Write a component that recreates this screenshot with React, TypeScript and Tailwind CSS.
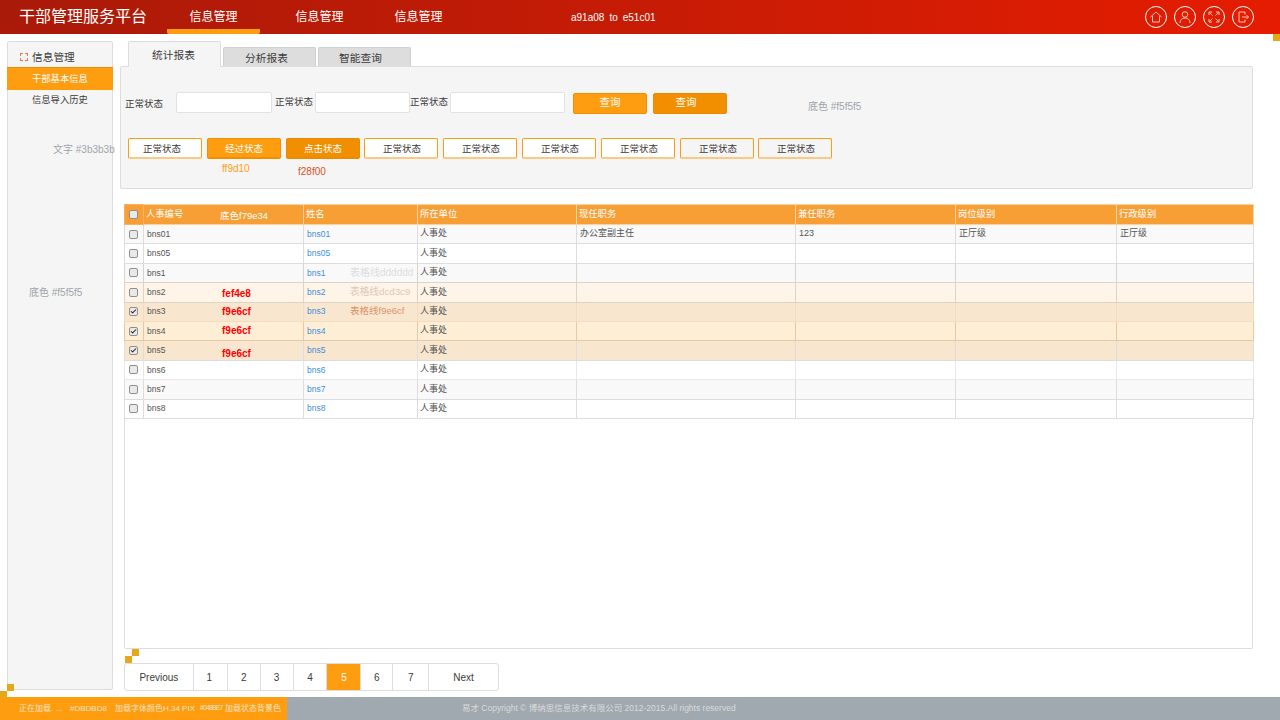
import { Check } from "lucide-react";

const cjk = "font-['Liberation_Sans','Noto_Sans_CJK_SC',sans-serif]";

const navItems = [
  { label: "信息管理", className: "w-[93px] ml-[19px]", active: true },
  { label: "信息管理", className: "w-[93px] ml-[13px]", active: false },
  { label: "信息管理", className: "w-[93px] ml-[6px]", active: false },
];

const normal = "bg-white border-[#ff9d10] border-b-[#fcc882] text-[#3b3b3b] pl-[2px]";
const toolButtons = [
  { label: "正常状态", className: "bg-white border-[#ff9d10] border-b-[#fcc882] text-[#3b3b3b] pr-[6px] mr-[5px]" },
  { label: "经过状态", className: "bg-[#ff9d10] border-[#f28f00] text-white mr-[5px]" },
  { label: "点击状态", className: "bg-[#f28f00] border-[#ec8a00] text-white mr-[4px]" },
  { label: "正常状态", className: `${normal} mr-[5px]` },
  { label: "正常状态", className: `${normal} mr-[5px]` },
  { label: "正常状态", className: `${normal} mr-[5px]` },
  { label: "正常状态", className: `${normal} mr-[5px]` },
  { label: "正常状态", className: "bg-[#f5f5f5] border-[#ff9d10] border-b-[#fcc882] text-[#3b3b3b] pl-[2px] mr-[4px]" },
  { label: "正常状态", className: "bg-[#f5f5f5] border-[#ff9d10] border-b-[#fcc882] text-[#3b3b3b] pl-[2px]" },
];

const columns = ["人事编号", "姓名", "所在单位", "现任职务", "兼任职务", "岗位级别", "行政级别"];

const rows = [
  { id: "bns01", bg: "bg-[#f9f9f9]", line: "border-[#dddddd]", checked: false, extra: ["办公室副主任", "123", "正厅级", "正厅级"] },
  { id: "bns05", bg: "bg-white", line: "border-[#dddddd]", checked: false },
  { id: "bns1", bg: "bg-[#f9f9f9]", line: "border-[#dcd3c9]", checked: false, note: "表格线dddddd", noteClass: "top-[1px] text-[10px] text-[#dddddd]" },
  { id: "bns2", bg: "bg-[#fef4e8]", line: "border-[#dcd3c9]", checked: false, tag: "fef4e8", tagTop: "top-[3px]", note: "表格线dcd3c9", noteClass: "top-[2px] text-[9.700px] text-[#dcc9b8]" },
  { id: "bns3", bg: "bg-[#f9e6cf]", line: "border-[#f3dcc0]", checked: true, tag: "f9e6cf", tagTop: "top-[1px]", note: "表格线f9e6cf", noteClass: "top-[1px] text-[9.500px] text-[#d9946a]" },
  { id: "bns4", bg: "bg-[#feeed6]", line: "border-[#e5c9a5]", checked: true, tag: "f9e6cf", tagTop: "top-[1px]" },
  { id: "bns5", bg: "bg-[#f9e6cf]", line: "border-[#dddddd]", checked: true, tag: "f9e6cf", tagTop: "top-[5px]" },
  { id: "bns6", bg: "bg-white", line: "border-[#e8e8e8]", checked: false },
  { id: "bns7", bg: "bg-[#f9f9f9]", line: "border-[#dddddd]", checked: false },
  { id: "bns8", bg: "bg-white", line: "border-[#dddddd]", checked: false },
];

const pages = [
  { label: "Previous", className: "w-[69px]" },
  { label: "1", className: "w-[34px] pr-[2px]" },
  { label: "2", className: "w-[33px]" },
  { label: "3", className: "w-[33px]" },
  { label: "4", className: "w-[34px]" },
  { label: "5", className: "w-[34px] bg-[#ff9d10] text-white" },
  { label: "6", className: "w-[32px]" },
  { label: "7", className: "w-[36px]" },
  { label: "Next", className: "w-[69px] border-r-0" },
];

function HeaderIcon({ children }: { children: React.ReactNode }) {
  return (
    <div className="flex h-[22px] w-[22px] items-center justify-center rounded-full border border-white">
      <svg width="14" height="14" viewBox="0 0 14 14" fill="none" stroke="#ffd5c8" strokeWidth="0.9">
        {children}
      </svg>
    </div>
  );
}

function Box({ checked }: { checked: boolean }) {
  return (
    <span className="flex h-[9px] w-[9px] items-center justify-center rounded-[2px] border border-[#8f8f8f] bg-[#e9e9e9]">
      {checked && <Check size={9} strokeWidth={3.5} className="text-[#222]" />}
    </span>
  );
}

function Corner({ className }: { className: string }) {
  return <span className={`absolute h-[7px] w-[7px] bg-[#e5a917] ${className}`} />;
}

export default function App() {
  return (
    <div className={`relative flex h-[720px] w-[1280px] flex-col overflow-hidden bg-white ${cjk}`}>
      <header className="flex h-[34px] shrink-0 items-stretch bg-gradient-to-r from-[#a91a08] to-[#e51c01] text-white">
        <div className="ml-[19px] w-[129px] pt-[6px] text-[16px] leading-[22px]">干部管理服务平台</div>
        {navItems.map((item, i) => (
          <div
            key={i}
            className={`${item.className} flex items-center justify-center border-b-[5px] pt-[5px] text-[12px] ${
              item.active ? "rounded-b-[2px] border-[#ff9d10]" : "border-transparent"
            }`}
          >
            {item.label}
          </div>
        ))}
        <div className="ml-[106px] flex items-center gap-[5px] text-[10px]">
          <span>a91a08</span>
          <span>to</span>
          <span>e51c01</span>
        </div>
        <div className="ml-auto mr-[26px] flex items-center gap-[7px]">
          <HeaderIcon>
            <path d="M1.500 7 7 2l5.500 5M3.500 6v6h7V6" />
          </HeaderIcon>
          <HeaderIcon>
            <circle cx="7" cy="4.500" r="2.800" />
            <path d="M2 13c0-3.200 2-5 5-5s5 1.800 5 5" />
          </HeaderIcon>
          <HeaderIcon>
            <path d="M2.500 2.500l3 3M11.500 2.500l-3 3M2.500 11.500l3-3M11.500 11.500l-3-3M2 5V2h3M9 2h3v3M2 9v3h3M12 9v3H9" />
          </HeaderIcon>
          <HeaderIcon>
            <path d="M9 4.500V2H3v10h6V9.500M6 7h6.500M10.500 5l2 2-2 2" />
          </HeaderIcon>
        </div>
      </header>
      <Corner className="right-0 top-[34px]" />

      <main className="flex min-h-0 flex-1">
        <aside className="relative ml-[7px] mt-[7px] mb-[7px] w-[106px] shrink-0 rounded-[2px] border border-[#dddddd] bg-[#f5f5f5] text-[#3b3b3b]">
          <div className="flex h-[25px] items-center pl-[12px] pt-[5px] text-[10.700px]">
            <span className="mr-[4px] h-[8px] w-[8px] border border-dashed border-[#ee7a4a]" />
            信息管理
          </div>
          <div className="-mx-px flex h-[23px] items-center border-t border-[#f28f00] bg-[#ff9d10] pl-[25px] pt-[2px] text-[9.300px] text-white">
            干部基本信息
          </div>
          <div className="flex h-[21px] items-center pl-[24px] pt-[1px] text-[9.300px]">信息导入历史</div>
          <span className="absolute left-[45px] top-[100px] whitespace-nowrap text-[10px] text-[#a0a5ab]">文字 #3b3b3b</span>
          <span className="absolute left-[21px] top-[243px] whitespace-nowrap text-[10px] text-[#a0a5ab]">底色 #f5f5f5</span>
        </aside>

        <div className="ml-[7px] mt-[7px] flex w-[1133px] flex-col">
          <div className="flex h-[25px] items-end pl-[8px] text-[#3b3b3b]">
            <div className="-mb-px z-10 flex h-[26px] w-[93px] items-center justify-center rounded-t-[2px] border border-b-0 border-[#dddddd] bg-[#f5f5f5] pr-[2px] pt-[2px] text-[10.700px]">
              统计报表
            </div>
            <div className="ml-[2px] flex h-[19px] w-[93px] items-center justify-center rounded-t-[2px] border border-b-0 border-[#d0d0d0] bg-[#dddddd] pr-[6px] pt-[2px] text-[10.700px]">
              分析报表
            </div>
            <div className="ml-[2px] flex h-[19px] w-[93px] items-center justify-center rounded-t-[2px] border border-b-0 border-[#d0d0d0] bg-[#dddddd] pr-[8px] pt-[2px] text-[10.700px]">
              智能查询
            </div>
          </div>

          <section className="relative h-[123px] shrink-0 rounded-[2px] border border-[#dddddd] bg-[#f5f5f5] text-[9.500px] text-[#3b3b3b]">
            <div className="mt-[25px] flex h-[22px] items-center pl-[4px]">
              <span className="mt-[1px] w-[51px] pt-[2px]">正常状态</span>
              <input className="mb-[2px] h-[21px] w-[96px] rounded-[2px] border border-[#e2e2e2] bg-white" />
              <span className="mb-[2px] ml-[3px] w-[40px]">正常状态</span>
              <input className="mb-[2px] h-[21px] w-[95px] rounded-[2px] border border-[#e2e2e2] bg-white" />
              <span className="mb-[2px] w-[40px]">正常状态</span>
              <input className="mb-[2px] h-[21px] w-[115px] rounded-[2px] border border-[#e2e2e2] bg-white" />
              <button className="ml-[8px] h-[21px] w-[74px] rounded-[2px] border border-[#f28f00] bg-[#ff9d10] text-[10.500px] text-white">
                查询
              </button>
              <button className="ml-[6px] h-[21px] w-[74px] rounded-[2px] border border-[#ec8a00] bg-[#f28f00] pr-[8px] text-[10.500px] text-white">
                查询
              </button>
            </div>
            <span className="absolute left-[687px] top-[32px] text-[10px] text-[#a0a5ab]">底色 #f5f5f5</span>

            <div className="ml-[7px] mt-[24px] flex">
              {toolButtons.map((b, i) => (
                <button
                  key={i}
                  className={`h-[21px] w-[74px] rounded-[2px] border border-b-2 pt-[2px] ${b.className}`}
                >
                  {b.label}
                </button>
              ))}
            </div>
            <span className="absolute left-[101px] top-[94px] text-[10px] text-[#ff9d10]">ff9d10</span>
            <span className="absolute left-[177px] top-[97px] text-[10px] text-[#d9531e]">f28f00</span>
          </section>

          <section className="ml-[4px] mt-[15px] h-[445px] w-[1129px] shrink-0 rounded-b-[2px] border border-t-0 border-[#dddddd] bg-white">
            <table className="-ml-px w-[1129px] table-fixed border-collapse text-[9px] text-[#555]">
              <colgroup>
                <col className="w-[19px]" />
                <col className="w-[160px]" />
                <col className="w-[114px]" />
                <col className="w-[159px]" />
                <col className="w-[219px]" />
                <col className="w-[160px]" />
                <col className="w-[161px]" />
                <col className="w-[137px]" />
              </colgroup>
              <thead>
                <tr className="h-[20px] bg-[#f79e34] text-white">
                  <th className="border border-[#f7b35f] p-0 pr-[1px]">
                    <span className="flex justify-center">
                      <Box checked={false} />
                    </span>
                  </th>
                  {columns.map((c, i) => (
                    <th key={c} className="relative border border-[#fbd39f] pl-[2px] text-left text-[9.300px] font-normal">
                      {c}
                      {i === 0 && <span className="absolute left-[76px] top-[4px] text-[9.500px]">底色f79e34</span>}
                    </th>
                  ))}
                </tr>
              </thead>
              <tbody>
                {rows.map((r) => (
                  <tr key={r.id} className={`h-[19.400px] ${r.bg}`}>
                    <td className={`border ${r.line} p-0 pr-[1px]`}>
                      <span className="flex justify-center">
                        <Box checked={r.checked} />
                      </span>
                    </td>
                    <td className={`relative border ${r.line} pl-[3px] text-[8.500px]`}>
                      {r.id}
                      {r.tag && (
                        <span className={`absolute left-[78px] text-[10px] font-bold text-[#ff0000] ${r.tagTop}`}>{r.tag}</span>
                      )}
                    </td>
                    <td className={`relative border ${r.line} pl-[3px] text-[8.500px] text-[#3e8fd8]`}>
                      {r.id}
                      {r.note && (
                        <span className={`absolute left-[46px] whitespace-nowrap ${r.noteClass}`}>{r.note}</span>
                      )}
                    </td>
                    <td className={`border ${r.line} pl-[2px]`}>人事处</td>
                    {[0, 1, 2, 3].map((i) => (
                      <td key={i} className={`border ${r.line} pl-[3px]`}>
                        {r.extra?.[i]}
                      </td>
                    ))}
                  </tr>
                ))}
              </tbody>
            </table>
          </section>

          <Corner className="left-[132px] top-[649px]" />
          <Corner className="left-[125px] top-[656px]" />

          <nav className="ml-[4px] mt-[14px] flex h-[28px] w-[375px] overflow-hidden rounded-[3px] border border-[#dddddd] font-['Liberation_Sans',sans-serif] text-[10px] text-[#3b3b3b]">
            {pages.map((p) => (
              <div key={p.label} className={`flex items-center justify-center border-r border-[#dddddd] ${p.className}`}>
                {p.label}
              </div>
            ))}
          </nav>
        </div>
      </main>

      <Corner className="left-[7px] top-[684px]" />
      <Corner className="left-0 top-[691px]" />

      <footer className="flex h-[23px] shrink-0 items-center bg-[#a0a9b0] text-[8.500px]">
        <div className="flex h-full w-[287px] items-center whitespace-nowrap bg-[#ff9d10] pl-[19px] text-[8px] text-[#f5e3c4]">
          <span className="w-[51px]">正在加载. ...</span>
          <span className="w-[45px]">#DBDBD8</span>
          <span className="w-[85px]">加载字体颜色H.34 PIX</span>
          <span className="w-[25px] text-[7px] tracking-[-0.9px]">#048BE7</span>
          <span>加载状态背景色</span>
        </div>
        <div className="ml-[175px] text-[#dbdbd8]">易才 Copyright © 博纳思信息技术有限公司 2012-2015.All rights reserved</div>
      </footer>
    </div>
  );
}
